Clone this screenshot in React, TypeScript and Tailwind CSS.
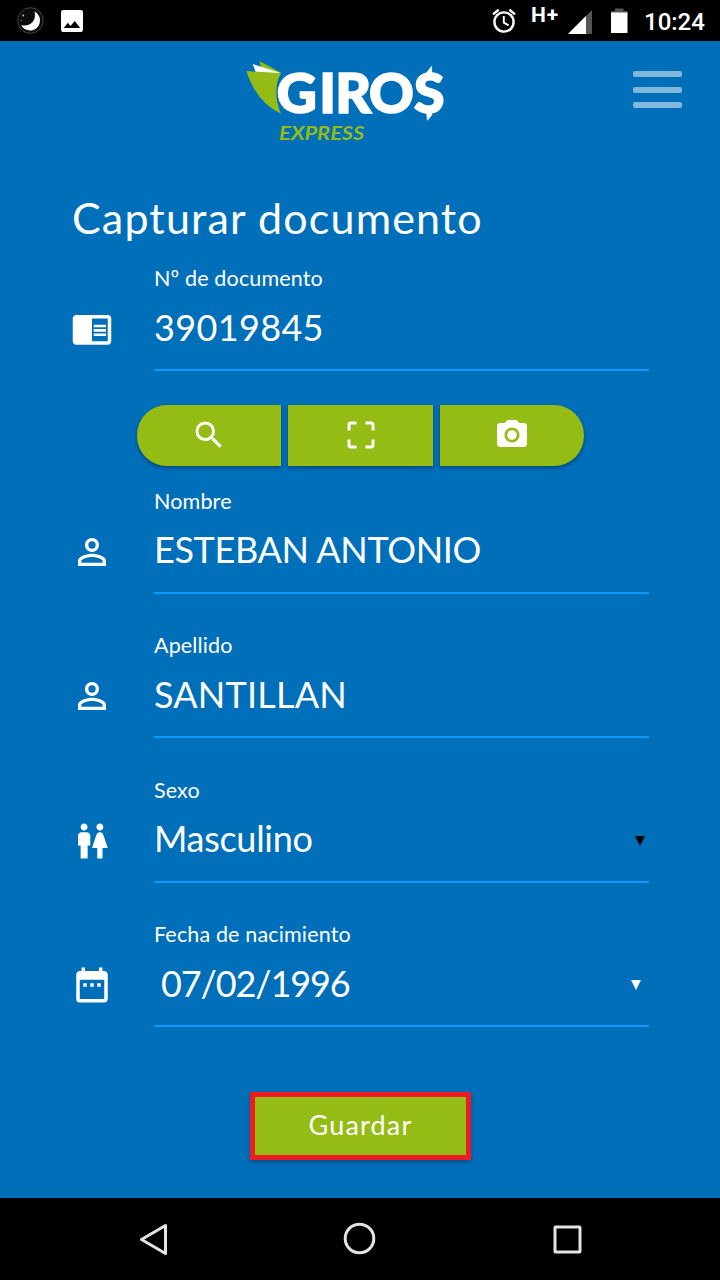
import React from 'react';
import {
  MdCameraAlt,
  MdChromeReaderMode,
  MdCropFree,
  MdDateRange,
  MdPersonOutline,
  MdSearch,
  MdWc,
} from 'react-icons/md';

const StatusBar: React.FC = () => (
  <div className="flex h-[41px] items-center justify-between bg-black text-white">
    <svg className="h-[41px] w-[100px]" viewBox="0 0 100 41">
      <circle cx="30.5" cy="20.5" r="12.8" fill="#0c0c0c" stroke="#454545" strokeWidth="1" />
      <path d="M34.5 11.5A10 10 0 1 1 21.2 25.2Q29 26.5 33 21.5Q36 17 34.5 11.5Z" fill="#fff" />
      <circle cx="23.2" cy="15.5" r="1" fill="#bbb" />
      <circle cx="21.2" cy="20.4" r="0.7" fill="#888" />
      <rect x="61" y="10" width="22" height="22" rx="2.2" fill="#fff" />
      <path d="M63.8 28L67.8 22.8L70.5 26L74.8 21L80.2 28Z" fill="#000" />
    </svg>
    <div className="flex h-full items-center">
      <svg className="h-[41px] w-[38px]" viewBox="490 0 38 41" fill="none" stroke="#fff">
        <circle cx="504" cy="22" r="9.6" strokeWidth="2.4" />
        <path d="M503.8 16V22.6L508.6 25.4" strokeWidth="1.9" />
        <path d="M493 14.4L498.6 9.8M509.4 9.8L515 14.4" strokeWidth="2.4" />
      </svg>
      <span className="w-[40px] self-start pt-[4px] pl-[3px] font-['Roboto'] text-[21px] leading-[22px] font-bold tracking-[0.8px]">H+</span>
      <svg className="h-[41px] w-[76px]" viewBox="568 0 76 41">
        <path d="M592 10V34H568Z" fill="#555" />
        <path d="M586 16V34H568Z" fill="#fff" />
        <path d="M615 8.5H623.5V11H627.5V14H611V11H615Z" fill="#555" />
        <rect x="611" y="12.5" width="16.5" height="20.5" fill="#fff" />
      </svg>
      <span className="w-[76px] pt-[3px] font-['Roboto'] text-[24px] leading-[41px] font-medium">10:24</span>
    </div>
  </div>
);

const Logo: React.FC = () => (
  <svg className="h-[100px] w-[220px]" viewBox="0 0 660 300">
    <path d="M70 33L137 69L78 62Z" fill="#95bc14" />
    <path d="M50 42L134 69L60 68Z" fill="#fff" />
    <path d="M31 63L135 70Q121 92 121 125Q121 160 135 191Q62 158 31 63Z" fill="#95bc14" />
    <g fill="#fff" stroke="#fff" strokeWidth="5" fontFamily="Lato, sans-serif" fontWeight="900">
      <text x="122 250 298 399 534" y="189" fontSize="166">GIROS</text>
      <path d="M571 69L587 49V72H571ZM572 188H587V196L574 211Z" strokeWidth="2" />
    </g>
    <text
      x="129"
      y="270"
      fill="#95bc14"
      fontFamily="Lato, sans-serif"
      fontSize="59"
      fontStyle="italic"
      fontWeight="700"
      textLength="256"
      lengthAdjust="spacingAndGlyphs"
    >
      EXPRESS
    </text>
  </svg>
);

interface FieldProps {
  label: string;
  icon: React.ReactNode;
  children: React.ReactNode;
}

const Field: React.FC<FieldProps> = ({ label, icon, children }) => (
  <div className="flex h-[108px] pr-[71px] pl-[71px] text-white">
    <div className="mb-[9px] flex h-[66px] w-[83px] shrink-0 items-center self-end">{icon}</div>
    <div className="flex flex-1 flex-col border-b-2 border-[#0a99ff]">
      <label className="h-[31px] text-[21.5px] leading-[30px] tracking-[0.15px]">{label}</label>
      <div className="flex h-[66px] items-center justify-between text-[36px]">{children}</div>
    </div>
  </div>
);

const Arrow: React.FC<{ className: string }> = ({ className }) => (
  <svg className={className} viewBox="0 0 10 10" fill="currentColor">
    <path d="M0 0H10L5 10Z" />
  </svg>
);

const buttonStyle =
  'flex h-[61px] items-center justify-center bg-[#95bc14] pb-px shadow-[0_2px_4px_rgba(0,0,0,0.35)]';

const App: React.FC = () => {
  return (
    <main className="flex h-[1280px] w-[720px] flex-col overflow-hidden bg-[#006fba] font-['Lato',sans-serif]">
      <StatusBar />

      <header className="flex h-[142px] justify-between pt-[9px] pl-[236px] pr-[38px]">
        <Logo />
        <button className="mt-[21px] flex h-[37px] w-[49px] flex-col justify-between">
          <span className="h-[6px] w-full rounded-[2px] bg-[#80b7dc]" />
          <span className="h-[6px] w-full rounded-[2px] bg-[#80b7dc]" />
          <span className="h-[6px] w-full rounded-[2px] bg-[#80b7dc]" />
        </button>
      </header>

      <h1 className="h-20 pl-[72px] text-[43px] leading-[70px] tracking-[1.15px] text-white">Capturar documento</h1>

      <Field label="Nº de documento" icon={<MdChromeReaderMode className="size-[42px]" />}>
        <span className="tracking-[0.35px]">39019845</span>
      </Field>

      <div className="mt-[34px] mb-[20px] flex gap-[7px] pl-[137px] text-white">
        <button className={`${buttonStyle} w-[144px] rounded-l-[30px]`}>
          <MdSearch className="size-9" />
        </button>
        <button className={`${buttonStyle} w-[145px]`}>
          <MdCropFree className="size-9" />
        </button>
        <button className={`${buttonStyle} w-[144px] rounded-r-[30px]`}>
          <MdCameraAlt className="size-9" />
        </button>
      </div>

      <div className="flex flex-col gap-9">
        <Field label="Nombre" icon={<MdPersonOutline className="size-[42px]" />}>
          <span className="pb-[2px] tracking-[-0.35px]">ESTEBAN ANTONIO</span>
        </Field>
        <Field label="Apellido" icon={<MdPersonOutline className="size-[42px]" />}>
          <span className="tracking-[0.2px]">SANTILLAN</span>
        </Field>
        <div className="flex flex-col gap-9 pt-px">
          <Field label="Sexo" icon={<MdWc className="size-[42px]" />}>
            <span className="pb-[2px] tracking-[-0.3px]">Masculino</span>
            <Arrow className="mt-[4px] mr-[4px] size-[10px] text-black" />
          </Field>
          <Field label="Fecha de nacimiento" icon={<MdDateRange className="size-[42px]" />}>
            <span className="pl-[7px] tracking-[-1.1px]">07/02/1996</span>
            <Arrow className="mt-[4px] mr-[8px] size-[10px]" />
          </Field>
        </div>
      </div>

      <button className="mt-[65px] ml-[250px] h-[68px] w-[221px] border-5 border-[#ed1c24] bg-[#95bc14] pb-[2px] text-[27px] tracking-[1.2px] text-white shadow-[0_2px_4px_rgba(0,0,0,0.3)]">
        Guardar
      </button>

      <nav className="mt-auto h-[82px] bg-black">
        <svg className="h-[82px] w-[720px]" viewBox="0 1198 720 82" fill="none" stroke="#e4e4e4" strokeWidth="3">
          <path d="M165.5 1225.5V1253.5L141.5 1239.5Z" strokeLinejoin="round" />
          <circle cx="359.5" cy="1238.5" r="14.3" />
          <rect x="555" y="1227" width="25" height="25" rx="0.5" />
        </svg>
      </nav>
    </main>
  );
};

export default App;
